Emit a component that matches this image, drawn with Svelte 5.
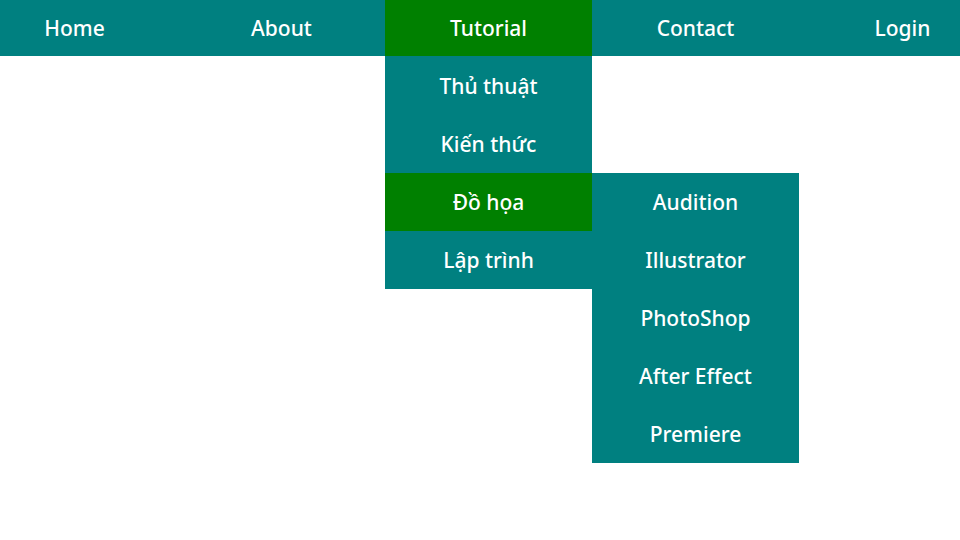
<script>
  const software = ['Audition', 'Illustrator', 'PhotoShop', 'After Effect', 'Premiere'];
  const items = [
    { label: 'Home' },
    { label: 'About' },
    {
      label: 'Tutorial',
      open: true,
      children: [
        { label: 'Thủ thuật' },
        { label: 'Kiến thức' },
        { label: 'Đồ họa', open: true, children: software.map((label) => ({ label })) },
        { label: 'Lập trình' }
      ]
    },
    { label: 'Contact' },
    { label: 'Login' }
  ];
</script>

{#snippet entries(list, level)}
  <ul class="level-{level}">
    {#each list as item}
      <li>
        <a href="#top" class:active={item.open}>{item.label}</a>
        {#if item.children}
          {@render entries(item.children, level + 1)}
        {/if}
      </li>
    {/each}
  </ul>
{/snippet}

<div class="page">
  <nav aria-label="Main">
    {@render entries(items, 1)}
  </nav>
</div>

<style>
  :global(body) {
    margin: 0;
    background: #fff;
  }

  .page {
    min-height: 100vh;
    overflow: hidden;
  }

  nav {
    font-family: 'Noto Sans', 'Open Sans', sans-serif;
    font-size: 21px;
    font-weight: 500;
    line-height: 56px;
    background: #008080;
  }

  ul {
    margin: 0;
    padding: 0;
    list-style: none;
    background: #008080;
  }

  .level-1 {
    display: flex;
    margin-left: -29px;
    margin-top: -2px;
  }

  li {
    position: relative;
    flex: 0 0 207px;
  }

  a {
    display: block;
    padding-top: 2px;
    color: #fff;
    text-align: center;
    text-decoration: none;
    white-space: nowrap;
  }

  .level-2 a {
    padding: 1px 0;
  }

  a:focus-visible,
  .active {
    background: #008000;
  }

  .level-2,
  .level-3 {
    position: absolute;
    width: 100%;
  }

  .level-2 {
    top: 100%;
    left: 0;
    padding-top: 1px;
  }

  .level-3 {
    top: 0;
    left: 100%;
  }
</style>
